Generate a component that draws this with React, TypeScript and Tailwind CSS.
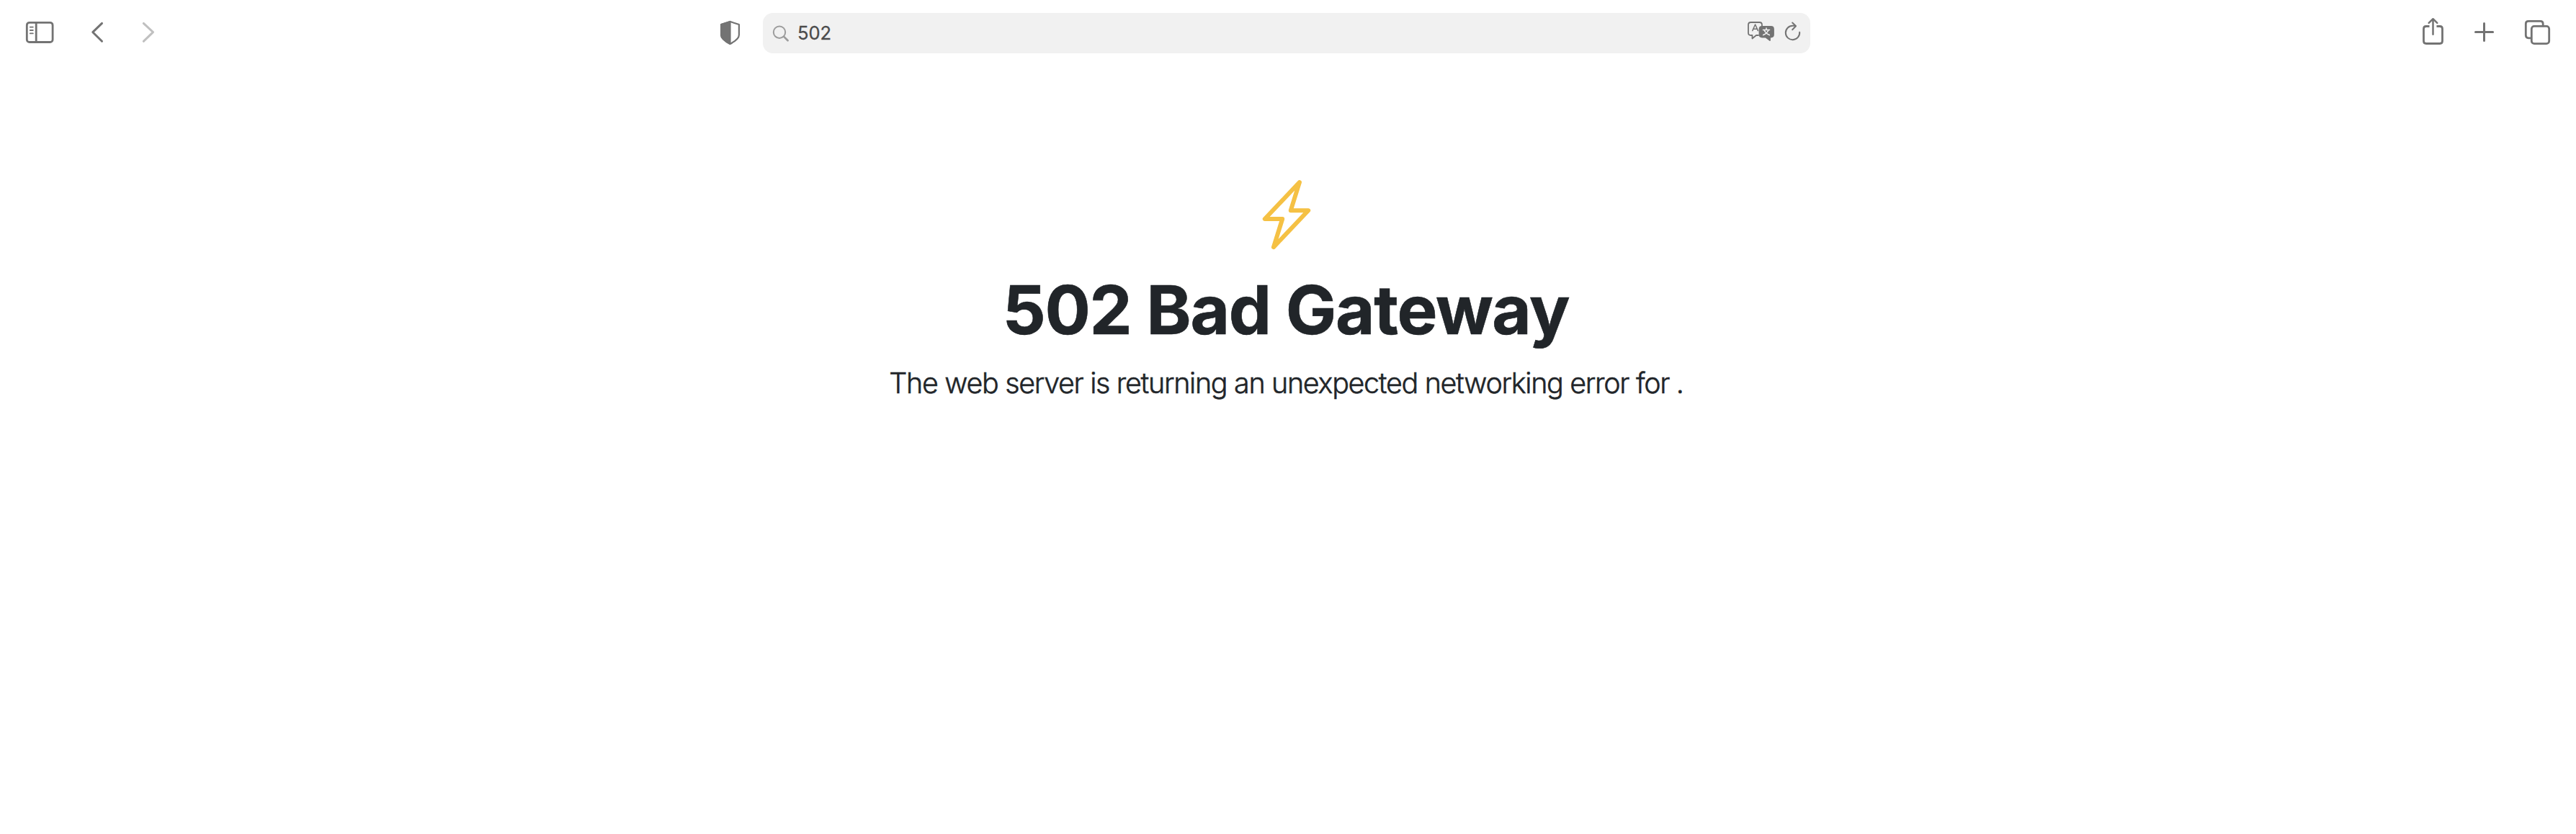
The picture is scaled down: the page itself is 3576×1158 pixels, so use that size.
import React from "react";

type IconProps = { box: string; w: number; h: number; color?: string; sw?: number; className?: string; children: React.ReactNode };

function Icon({ box, w, h, color = "#737373", sw = 2.8, className = "", children }: IconProps) {
  return (
    <svg viewBox={box} width={w} height={h} fill="none" stroke={color} strokeWidth={sw} strokeLinecap="round" strokeLinejoin="round" className={"shrink-0 " + className}>
      {children}
    </svg>
  );
}

function Toolbar() {
  return (
    <header className="flex h-20 items-start pt-[18px]">
      <nav className="flex w-[1000px] pl-[34px]">
        <Icon box="34 18 42 56" w={42} h={56}>
          <rect x="37.3" y="31.3" width="35.8" height="27.2" rx="3.6" />
          <path d="M50.2 31.5v27" />
          <path d="M41.8 37.6h4M41.8 42h4M41.8 46.4h4" strokeWidth="1.9" />
        </Icon>
        <Icon box="124 18 22 56" w={22} h={56} sw={3} className="ml-12">
          <path d="M141.5 32.4 128.8 44.7 141.5 57.3" />
        </Icon>
        <Icon box="194 18 22 56" w={22} h={56} sw={3} color="#c0c0c0" className="ml-12">
          <path d="M199.3 32.4 212.5 44.7 199.3 57.3" />
        </Icon>
      </nav>
      <Icon box="1000 18 28 56" w={28} h={56} sw={2.2}>
        <path d="M1013.5 30 1025.9 34V48.500Q1025.900 54.500 1013.500 60.900Q1001.100 54.500 1001.100 48.500V34Z" />
        <path d="M1013.5 30V60.900Q1001.100 54.500 1001.100 48.500V34Z" fill="#737373" />
      </Icon>
      <div className="ml-[31px] flex h-14 w-[1454px] items-center rounded-[14px] bg-[#f1f1f1]">
        <Icon box="1072 18 24 56" w={24} h={56} color="#9c9c9c" sw={2} className="ml-[13px]">
          <circle cx="1082" cy="44.700" r="8.200" />
          <path d="M1088.200 50.900 1093.600 56.300" strokeWidth="2.700" />
        </Icon>
        <span className="ml-[11px] font-['Inter',sans-serif] text-[25.5px] leading-[56px] text-[#4b4b4b] [-webkit-text-stroke:0.3px_#4b4b4b]">502</span>
        <Icon box="2424 18 42 56" w={42} h={56} sw={1.8} className="ml-auto">
          <path d="M2441 49H2438L2432.500 53.500V49H2430.500Q2427 49 2427 45.500V34.500Q2427 31 2430.500 31H2442.500Q2446 31 2446 34.500V36" />
          <path d="M2432.800 42.600 2436.600 34 2440.400 42.600M2434 40.200H2439.200" strokeWidth="1.500" />
          <path d="M2446 36.800H2458.500Q2462 36.800 2462 40.300V48Q2462 51.500 2458.500 51.500H2457V56L2451 51.500H2446Q2442.500 51.500 2442.500 48V40.300Q2442.500 36.800 2446 36.800Z" fill="#737373" />
          <path d="M2452 39V41M2447.500 41.500H2456.500M2455 41.800Q2453 46.500 2447.800 48.600M2449 41.800Q2451 46.500 2456.300 48.600" stroke="#f1f1f1" strokeWidth="1.600" />
        </Icon>
        <Icon box="2474 18 28 56" w={28} h={56} sw={2} className="ml-2 mr-[11px]">
          <path d="M2498.200 44.800A9.700 9.700 0 1 1 2488.500 35.800H2492.500" />
          <path d="M2488.200 31.500 2493 36.200 2488.200 41.200" />
        </Icon>
      </div>
      <div className="ml-auto flex pr-[34px]">
        <Icon box="3361 18 34 56" w={34} h={56}>
          <path d="M3372.500 36.500H3368Q3364.500 36.500 3364.500 40V57Q3364.500 60.500 3368 60.500H3387Q3390.500 60.500 3390.500 57V40Q3390.500 36.500 3387 36.500H3382.500" strokeLinecap="butt" />
          <path d="M3377.500 47.800V26.500M3371.700 31.800 3377.500 26.200 3383.300 31.800" strokeWidth="2.500" />
        </Icon>
        <Icon box="3433 18 32 56" w={32} h={56} sw={3} className="ml-[38px]">
          <path d="M3436.500 44.500H3460.600M3448.500 32.400V56.600" />
        </Icon>
        <Icon box="3503 18 39 56" w={39} h={56} className="ml-[38px]">
          <path d="M3513 52.800H3510Q3506.300 52.800 3506.300 49.100V33Q3506.300 29.300 3510 29.300H3526.500Q3530.200 29.300 3530.200 33V36" />
          <rect x="3514.300" y="36.400" width="24.400" height="24.200" rx="3.700" />
        </Icon>
      </div>
    </header>
  );
}

export default function App() {
  return (
    <div className="min-h-[1158px] w-full bg-white font-['Inter',sans-serif] text-[#212529]">
      <Toolbar />
      <main className="flex flex-col items-center pt-[166px]">
        <Icon box="1750 246 72 104" w={72} h={104} color="#f5c144" sw={6} className="mr-1">
          <path d="M1804 253 1755.800 304H1780.200L1768 343.200 1816.200 292.200H1791.800Z" />
        </Icon>
        <h1 className="mr-[6px] mt-[20px] whitespace-nowrap text-[94px] font-bold leading-[120px] tracking-[-1.270px] [-webkit-text-stroke:0.6px_#212529]">502 Bad Gateway</h1>
        <p className="mr-[5px] mt-[12px] whitespace-nowrap text-[39.500px] font-light leading-[60px] tracking-[-1.350px] [-webkit-text-stroke:0.5px_#212529]">The web server is returning an unexpected networking error for .</p>
      </main>
    </div>
  );
}
